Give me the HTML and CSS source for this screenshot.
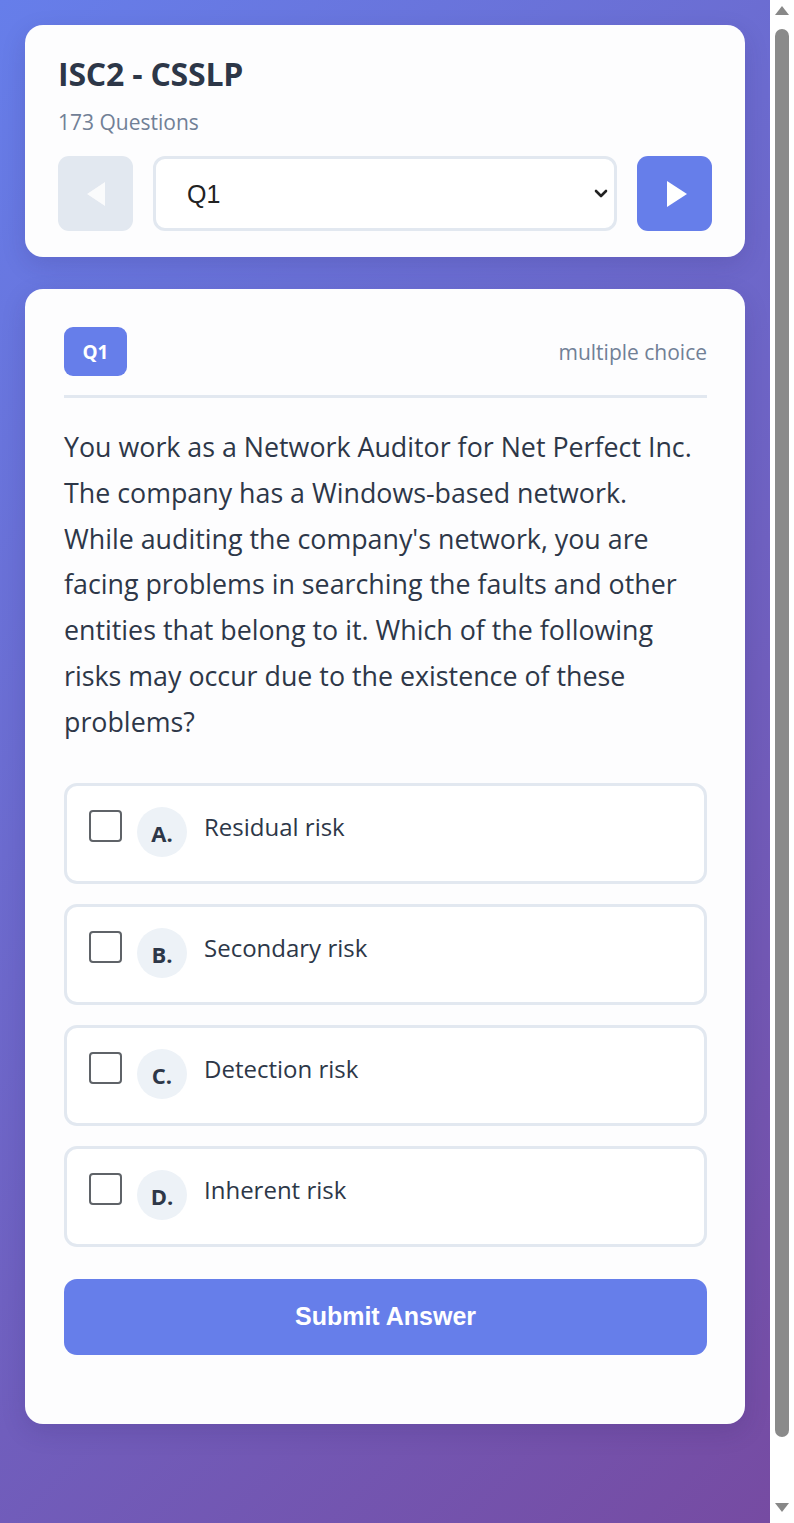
FILE: index.html
```html
<!DOCTYPE html>
<html lang="en">
<head>
<meta charset="utf-8">
<title>ISC2 - CSSLP</title>
<link rel="stylesheet" href="styles.css">
</head>
<body>
<div class="page">
  <main class="main">
    <section class="card header-card">
      <h1 class="title">ISC2 - CSSLP</h1>
      <p class="count">173 Questions</p>
      <div class="nav">
        <button class="nav-btn prev" disabled aria-label="Previous">
          <svg width="22" height="26" viewBox="0 0 22 26"><path d="M20 1 L2 13 L20 25 Z" fill="#fff"/></svg>
        </button>
        <div class="select-wrap">
          <select class="q-select"><option>Q1</option><option>Q2</option></select>
          <svg class="chev" width="14" height="10" viewBox="0 0 14 10"><path d="M2 2 L7 7 L12 2" fill="none" stroke="#222" stroke-width="2.6" stroke-linecap="round" stroke-linejoin="round"/></svg>
        </div>
        <button class="nav-btn next" aria-label="Next">
          <svg width="24" height="28" viewBox="0 0 24 28"><path d="M2 1 L22 14 L2 27 Z" fill="#fff"/></svg>
        </button>
      </div>
    </section>

    <section class="card question-card">
      <div class="q-head">
        <span class="badge">Q1</span>
        <span class="q-type">multiple choice</span>
      </div>
      <p class="q-text">You work as a Network Auditor for Net Perfect Inc. The company has a Windows-based network. While auditing the company's network, you are facing problems in searching the faults and other entities that belong to it. Which of the following risks may occur due to the existence of these problems?</p>
      <div class="options">
        <label class="option"><span class="box"></span><span class="letter">A.</span><span class="opt-text">Residual risk</span></label>
        <label class="option"><span class="box"></span><span class="letter">B.</span><span class="opt-text">Secondary risk</span></label>
        <label class="option"><span class="box"></span><span class="letter">C.</span><span class="opt-text">Detection risk</span></label>
        <label class="option"><span class="box"></span><span class="letter">D.</span><span class="opt-text">Inherent risk</span></label>
      </div>
      <button class="submit">Submit Answer</button>
    </section>
  </main>
  <div class="scrollbar">
    <span class="arrow up"></span>
    <span class="thumb"></span>
    <span class="arrow down"></span>
  </div>
</div>
</body>
</html>
```

FILE: styles.css
```css
* { box-sizing: border-box; }
html, body { margin: 0; padding: 0; }
body {
  font-family: "Open Sans", "Noto Sans", sans-serif;
  color: #2d3748;
  background: #fff;
}
.page {
  display: flex;
  width: 794px;
  height: 1523px;
  overflow: hidden;
}
.main {
  width: 770px;
  flex: none;
  background: linear-gradient(135deg, #667eea 0%, #764ba2 100%);
  padding: 25px 25px;
  display: flex;
  flex-direction: column;
  gap: 32px;
}
.card {
  background: #fdfdfe;
  border-radius: 18px;
  box-shadow: 0 8px 24px rgba(40, 30, 90, 0.15);
}
.header-card {
  padding: 28px 33px 26px;
}
.title {
  margin: 0;
  font-size: 32px;
  font-weight: 700;
  line-height: 42px;
  color: #2d3748;
  letter-spacing: -0.2px;
}
.count {
  margin: 13px 0 0;
  font-size: 21px;
  line-height: 28px;
  color: #718096;
}
.nav {
  margin-top: 20px;
  display: flex;
  gap: 20px;
  height: 75px;
}
.nav-btn {
  width: 75px;
  height: 75px;
  flex: none;
  border: none;
  border-radius: 11px;
  display: flex;
  align-items: center;
  justify-content: center;
  padding: 0;
}
.prev { background: #e2e8f0; }
.prev svg { opacity: 0.85; }
.next { background: #667eea; }
.next svg { margin-left: 4px; }
.select-wrap {
  flex: 1;
  position: relative;
}
.q-select {
  appearance: none;
  -webkit-appearance: none;
  width: 100%;
  height: 75px;
  border: 3px solid #e2e8f0;
  border-radius: 12px;
  background: #fff;
  font-family: "Liberation Sans", Arial, sans-serif;
  font-size: 25px;
  color: #222;
  padding: 0 0 0 31px;
  outline: none;
}
.chev {
  position: absolute;
  right: 9px;
  top: 33px;
  pointer-events: none;
}
.question-card {
  padding: 38px 38px 69px 39px;
}
.q-head {
  display: flex;
  justify-content: space-between;
  align-items: center;
  padding-bottom: 19px;
  border-bottom: 3px solid #e2e8f0;
}
.badge {
  background: #667eea;
  color: #fff;
  font-weight: 700;
  font-size: 19px;
  width: 63px;
  height: 49px;
  border-radius: 9px;
  display: flex;
  align-items: center;
  justify-content: center;
}
.q-type {
  color: #718096;
  font-size: 21px;
}
.q-text {
  margin: 26px 0 38px;
  max-width: 634px;
  font-size: 26.8px;
  line-height: 45.8px;
  color: #2d3748;
}
.options {
  display: flex;
  flex-direction: column;
  gap: 20px;
}
.option {
  height: 101px;
  border: 3px solid #e2e8f0;
  border-radius: 13px;
  display: flex;
  align-items: flex-start;
  padding: 21px 0 0 22px;
  background: #fff;
}
.box {
  width: 33px;
  height: 32px;
  border: 2px solid #5f6368;
  border-radius: 4px;
  margin-top: 3px;
  flex: none;
}
.letter {
  width: 50px;
  height: 50px;
  border-radius: 50%;
  background: #edf2f7;
  display: flex;
  align-items: center;
  justify-content: center;
  font-weight: 700;
  font-size: 22px;
  margin-left: 15px;
  padding-top: 3px;
  flex: none;
}
.opt-text {
  margin-left: 17px;
  font-size: 24px;
  line-height: 40px;
  margin-top: 0;
}
.submit {
  margin-top: 32px;
  width: 100%;
  height: 76px;
  border: none;
  border-radius: 13px;
  background: #667eea;
  color: #fff;
  font-family: "Liberation Sans", Arial, sans-serif;
  font-weight: 700;
  font-size: 25px;
}
.scrollbar {
  width: 24px;
  flex: none;
  background: #fff;
  display: flex;
  flex-direction: column;
  align-items: center;
}
.arrow {
  width: 0;
  height: 0;
  border-left: 7px solid transparent;
  border-right: 7px solid transparent;
}
.arrow.up {
  border-bottom: 9px solid #888;
  margin-top: 6px;
}
.thumb {
  width: 14px;
  height: 1408px;
  margin-top: 14px;
  background: #8a8a8a;
  border-radius: 7px;
}
.arrow.down {
  border-top: 9px solid #888;
  margin-top: 66px;
}
```
